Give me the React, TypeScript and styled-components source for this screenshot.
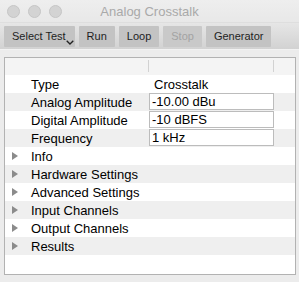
import React from "react";
import styled, { createGlobalStyle } from "styled-components";

const GlobalStyle = createGlobalStyle`
  html, body {
    margin: 0;
    padding: 0;
    background: #ececec;
  }
  body {
    font-family: "Liberation Sans", Arial, sans-serif;
  }
`;

const Window = styled.div`
  width: 299px;
  height: 282px;
  display: flex;
  flex-direction: column;
  background: #ececec;
  overflow: hidden;
`;

const TitleBar = styled.div`
  height: 22px;
  display: grid;
  grid-template-columns: 1fr auto 1fr;
  align-items: center;
  background: linear-gradient(#eeeeee, #e8e8e8);
`;

const Lights = styled.div`
  display: flex;
  gap: 8px;
  padding-left: 7px;
  padding-top: 1px;
`;

const Light = styled.span`
  width: 11px;
  height: 11px;
  border-radius: 50%;
  background: #d3d3d3;
  border: 0.5px solid #c6c6c6;
`;

const Title = styled.div`
  font-size: 13px;
  color: #a9a9a9;
  text-align: center;
`;

const Toolbar = styled.div`
  height: 26px;
  display: flex;
  align-items: center;
  gap: 4px;
  padding: 0 4px;
  background: linear-gradient(#e6e6e6, #d2d2d2);
  border-top: 1px solid #dedede;
  border-bottom: 1px solid #f2f2f2;
`;

const ToolButton = styled.button<{ $menu?: boolean }>`
  height: 21px;
  display: inline-flex;
  align-items: center;
  padding: 0 ${(p) => (p.$menu ? "1px" : "8px")} 0 8px;
  border: none;
  border-radius: 1px;
  background: ${(p) => (p.disabled ? "#c9c9c9" : "#c3c3c3")};
  color: ${(p) => (p.disabled ? "#a3a3a3" : "#1e1e1e")};
  font-family: "Liberation Sans", Arial, sans-serif;
  font-size: 11px;
  cursor: default;
`;

const Chevron = styled.svg`
  align-self: flex-end;
  margin-bottom: 2px;
`;

const Body = styled.div`
  flex: 1;
  display: flex;
  padding: 7px 3px 7px 4px;
`;

const Table = styled.div`
  flex: 1;
  display: flex;
  flex-direction: column;
  border: 1px solid #b2b2b2;
  background: #ffffff;
`;

const HeaderRow = styled.div`
  height: 17px;
  display: grid;
  grid-template-columns: 144px 125px 1fr;
  background: #f4f4f4;
`;

const HeaderCell = styled.div<{ $divider?: boolean }>`
  margin: 2px 0 3px;
  border-right: ${(p) => (p.$divider ? "1px solid #d2d2d2" : "none")};
`;

const Row = styled.div<{ $alt: boolean }>`
  height: 18px;
  display: grid;
  grid-template-columns: 144px 125px 1fr;
  background: ${(p) => (p.$alt ? "#efefef" : "#ffffff")};
  font-size: 13px;
  color: #000;
`;

const NameCell = styled.div<{ $group?: boolean }>`
  display: flex;
  align-items: center;
  gap: 13px;
  padding-left: ${(p) => (p.$group ? "7px" : "26px")};
  white-space: nowrap;
`;

const ValueCell = styled.div`
  display: flex;
  align-items: center;
  padding-left: 5px;
`;

const ValueInput = styled.input`
  box-sizing: border-box;
  align-self: flex-start;
  width: 125px;
  height: 17px;
  margin: 0;
  padding: 0 2px;
  border: 1px solid #bcbcbc;
  background: #fff;
  font-family: "Liberation Sans", Arial, sans-serif;
  font-size: 13px;
  color: #000;
  outline: none;
`;

const Filler = styled.div`
  flex: 1;
  background: #ffffff;
`;

const Disclosure = () => (
  <svg width="6" height="8" viewBox="0 0 6 8">
    <path d="M0 0 L6 4 L0 8 Z" fill="#8b8b8b" />
  </svg>
);

const params = [
  { name: "Type", value: "Crosstalk", editable: false },
  { name: "Analog Amplitude", value: "-10.00 dBu", editable: true },
  { name: "Digital Amplitude", value: "-10 dBFS", editable: true },
  { name: "Frequency", value: "1 kHz", editable: true },
];

const groups = [
  "Info",
  "Hardware Settings",
  "Advanced Settings",
  "Input Channels",
  "Output Channels",
  "Results",
];

export default function App() {
  return (
    <>
      <GlobalStyle />
      <Window>
        <TitleBar>
          <Lights>
            <Light />
            <Light />
            <Light />
          </Lights>
          <Title>Analog Crosstalk</Title>
          <div />
        </TitleBar>
        <Toolbar>
          <ToolButton $menu>
            Select Test
            <Chevron width="8" height="5" viewBox="0 0 8 5">
              <path d="M0.7 0.7 L4 4 L7.3 0.7" fill="none" stroke="#222" strokeWidth="1.3" />
            </Chevron>
          </ToolButton>
          <ToolButton>Run</ToolButton>
          <ToolButton>Loop</ToolButton>
          <ToolButton disabled>Stop</ToolButton>
          <ToolButton>Generator</ToolButton>
        </Toolbar>
        <Body>
          <Table>
            <HeaderRow>
              <HeaderCell $divider />
              <HeaderCell $divider />
              <HeaderCell />
            </HeaderRow>
            {params.map((p, i) => (
              <Row key={p.name} $alt={i % 2 === 1}>
                <NameCell>{p.name}</NameCell>
                {p.editable ? (
                  <ValueInput defaultValue={p.value} />
                ) : (
                  <ValueCell>{p.value}</ValueCell>
                )}
                <div />
              </Row>
            ))}
            {groups.map((g, i) => (
              <Row key={g} $alt={(i + params.length) % 2 === 1}>
                <NameCell $group>
                  <Disclosure />
                  {g}
                </NameCell>
                <div />
                <div />
              </Row>
            ))}
            <Filler />
          </Table>
        </Body>
      </Window>
    </>
  );
}
